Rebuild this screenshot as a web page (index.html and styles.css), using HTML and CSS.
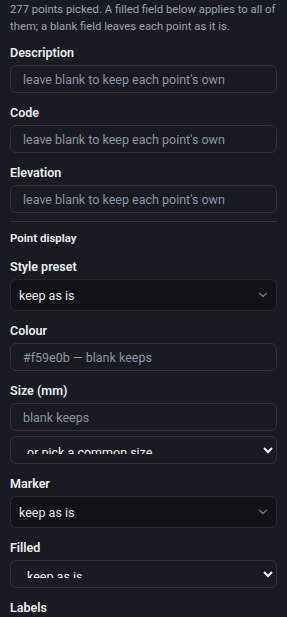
FILE: index.html
```html
<!DOCTYPE html>
<html lang="en">
	<head>
		<title>Edit picked points</title>
		<meta charset="UTF-8">
		<meta content="width=device-width,initial-scale=1.0" name="viewport">
		<link rel="stylesheet" href="styles.css">
	</head>
	<body>
		<div class="panel">
			<p class="hint">277 points picked. A filled field below applies to all of them; a blank field leaves each point as it is.</p>

			<div class="field">
				<label for="fDesc">Description</label>
				<input id="fDesc" class="txt" type="text" placeholder="leave blank to keep each point's own">
			</div>
			<div class="field">
				<label for="fCode">Code</label>
				<input id="fCode" class="txt" type="text" placeholder="leave blank to keep each point's own">
			</div>
			<div class="field last">
				<label for="fElev">Elevation</label>
				<input id="fElev" class="txt" type="text" placeholder="leave blank to keep each point's own">
			</div>

			<hr class="divider">
			<div class="section-title">Point display</div>

			<div class="field">
				<label for="fPreset">Style preset</label>
				<div class="select-wrap">
					<select id="fPreset" class="pretty">
						<option>keep as is</option>
						<option>Control</option>
						<option>Boundary</option>
					</select>
					<svg class="chev" width="10" height="6" viewBox="0 0 10 6"><path d="M1.5 1.2 5 4.6 8.5 1.2" fill="none" stroke="#6b7280" stroke-width="1.4" stroke-linecap="round" stroke-linejoin="round"/></svg>
				</div>
			</div>
			<div class="field">
				<label for="fColour">Colour</label>
				<input id="fColour" class="txt" type="text" placeholder="#f59e0b — blank keeps">
			</div>
			<div class="field">
				<label for="fSize">Size (mm)</label>
				<input id="fSize" class="txt" type="text" placeholder="blank keeps">
				<select class="native size-pick">
					<option>or pick a common size</option>
					<option>1.0</option>
					<option>1.5</option>
					<option>2.0</option>
				</select>
			</div>
			<div class="field">
				<label for="fMarker">Marker</label>
				<div class="select-wrap">
					<select id="fMarker" class="pretty">
						<option>keep as is</option>
						<option>circle</option>
						<option>square</option>
						<option>triangle</option>
					</select>
					<svg class="chev" width="10" height="6" viewBox="0 0 10 6"><path d="M1.5 1.2 5 4.6 8.5 1.2" fill="none" stroke="#6b7280" stroke-width="1.4" stroke-linecap="round" stroke-linejoin="round"/></svg>
				</div>
			</div>
			<div class="field">
				<label for="fFilled">Filled</label>
				<select id="fFilled" class="native">
					<option>keep as is</option>
					<option>yes</option>
					<option>no</option>
				</select>
			</div>
			<div class="field">
				<label>Labels</label>
			</div>
		</div>
	</body>
</html>
```

FILE: styles.css
```css
html, body { margin: 0; padding: 0; overflow: hidden; }
body {
	background: #181b22;
	color: #e6e8eb;
	font-family: Roboto, "Liberation Sans", sans-serif;
	font-size: 12.5px;
}
.panel { padding: 2px 10px 0 10px; }

.hint {
	margin: 0 0 10px 0;
	font-size: 11.3px;
	line-height: 16.5px;
	color: #9aa2ae;
}

.field { display: flex; flex-direction: column; margin-bottom: 12px; }
.field.last { margin-bottom: 8px; }
.field label {
	font-size: 12.5px;
	font-weight: 600;
	line-height: 16px;
	margin-bottom: 4px;
	color: #eceef1;
}

.txt {
	box-sizing: border-box;
	height: 28px;
	padding: 0 12px;
	border: 1px solid #2c313a;
	border-radius: 6px;
	background: #181b22;
	color: #e6e8eb;
	font-family: inherit;
	font-size: 12.5px;
	outline: none;
}
.txt::placeholder { color: #8a94a2; }

.divider { border: 0; border-top: 1px solid #2c313a; margin: 0 0 8px 0; }
.section-title {
	font-size: 11.5px;
	font-weight: 600;
	line-height: 16px;
	margin-bottom: 13px;
	color: #eceef1;
}

.select-wrap { position: relative; }
.pretty {
	box-sizing: border-box;
	width: 100%;
	height: 32px;
	padding: 0 24px 0 8px;
	border: 1px solid #262a32;
	border-radius: 6px;
	background: #111318;
	color: #e6e8eb;
	font-family: inherit;
	font-size: 12.5px;
	appearance: none;
	-webkit-appearance: none;
	outline: none;
}
.chev { position: absolute; right: 9px; top: 13px; pointer-events: none; }

.native {
	box-sizing: border-box;
	width: 100%;
	height: 28px;
	padding: 7px 12px 9px 12px;
	border: 1px solid #2c313a;
	border-radius: 6px;
	background-color: #181b22;
	color: #f2f3f5;
	color-scheme: dark;
	font-family: inherit;
	font-size: 12.5px;
	outline: none;
}
.size-pick { margin-top: 5px; }
```
